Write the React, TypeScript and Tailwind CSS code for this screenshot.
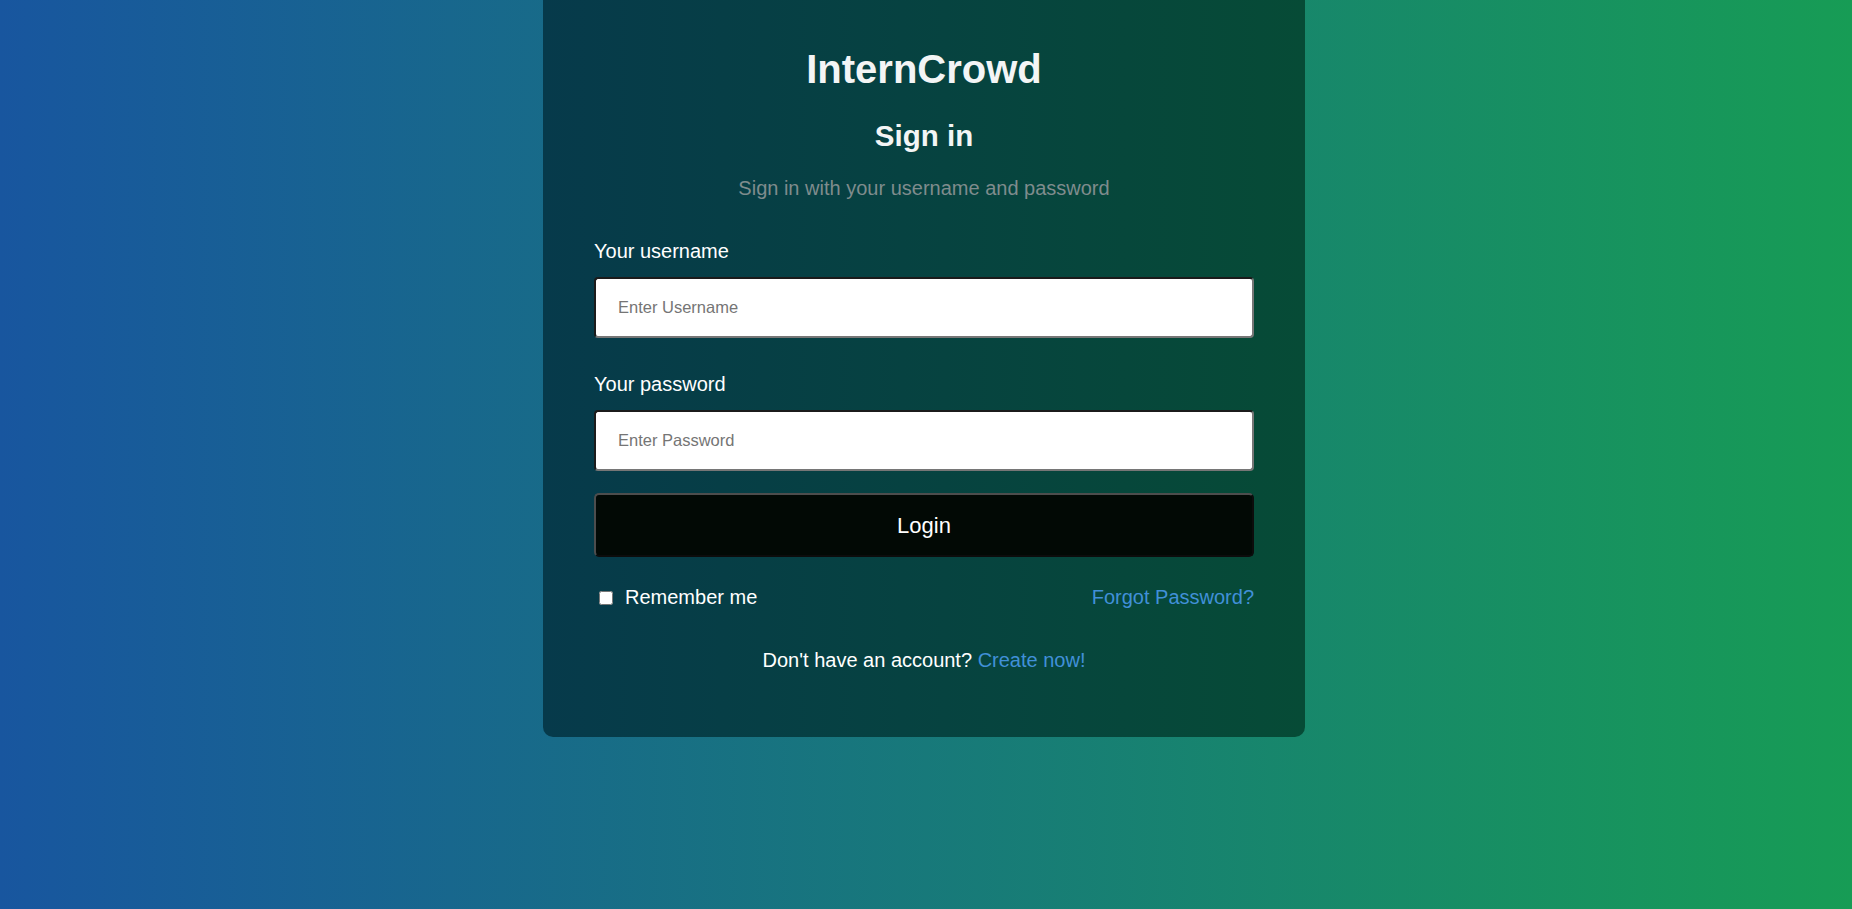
import { useState } from "react";

export default function App() {
  const [remember, setRemember] = useState(false);

  return (
    <div className="flex min-h-screen w-full flex-col bg-[linear-gradient(to_right,#18569f,#179c55)] font-['Liberation_Sans',Arial,sans-serif]">
      <div className="mx-auto -mt-4 w-[762px] -translate-x-[2px] rounded-[10px] bg-[linear-gradient(to_right,#063a4b,#064b36)] px-[51px] pt-[62px] pb-[65px]">
        <h1 className="text-center text-[40px] font-bold leading-[46px] text-[#f3f5f5]">InternCrowd</h1>
        <h2 className="mt-[27px] text-center text-[29.5px] font-bold leading-[34px] text-[#f3f5f5]">Sign in</h2>
        <p className="mt-[24px] text-center text-[20px] leading-[23px] text-[#7f8c8d]">
          Sign in with your username and password
        </p>

        <form className="mt-[40px]" onSubmit={(e) => e.preventDefault()}>
          <FormField label="Your username" name="username" placeholder="Enter Username" />
          <div className="mt-[35px]">
            <FormField label="Your password" name="password" type="password" placeholder="Enter Password" />
          </div>

          <button
            type="submit"
            className="mt-[22px] block h-[64px] w-full rounded-[5px] border-2 border-t-[#4d4d4d] border-l-[#4d4d4d] border-b-[#0c0c0c] border-r-[#0c0c0c] bg-[#020905] text-[22px] text-white"
          >
            Login
          </button>

          <div className="mt-[29px] flex items-center justify-between">
            <label className="flex items-center text-[20px] leading-[23px] text-white">
              <input
                type="checkbox"
                checked={remember}
                onChange={(e) => setRemember(e.target.checked)}
                className="ml-[5px] mr-[12px] h-[14px] w-[14px]"
              />
              Remember me
            </label>
            <a href="#" className="text-[20px] leading-[23px] text-[#4190d8]">
              Forgot Password?
            </a>
          </div>

          <p className="mt-[40px] text-center text-[20px] leading-[23px] text-white">
            Don't have an account?{" "}
            <a href="#" className="text-[#4190d8]">
              Create now!
            </a>
          </p>
        </form>
      </div>
    </div>
  );
}

function FormField({
  label,
  name,
  placeholder,
  type = "text",
}: {
  label: string;
  name: string;
  placeholder: string;
  type?: string;
}) {
  return (
    <div>
      <label htmlFor={name} className="block text-[20px] leading-[22px] text-white">
        {label}
      </label>
      <input
        id={name}
        name={name}
        type={type}
        placeholder={placeholder}
        className="mt-[15px] block h-[61px] w-full rounded-[4px] border-2 border-t-[#1b1b1b] border-l-[#1b1b1b] border-b-[#767676] border-r-[#767676] bg-white px-[22px] text-[16.5px] text-black placeholder-[#757575] outline-none"
      />
    </div>
  );
}
